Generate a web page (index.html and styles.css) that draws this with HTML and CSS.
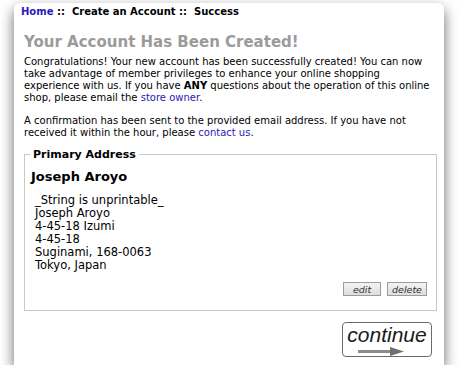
FILE: index.html
```html
<!DOCTYPE html>
<html lang="en">
  <head>
    <meta charset="UTF-8" />
    <title>Create an Account - Success</title>
    <link rel="stylesheet" href="styles.css">
  </head>
  <body>
    <div class="window">
      <div class="breadcrumb">
        <a href="#" class="crumb-link">Home</a> ::&nbsp; Create an Account ::&nbsp; Success
      </div>

      <h1 class="page-heading">Your Account Has Been Created!</h1>

      <p class="intro">
        Congratulations! Your new account has been successfully created! You can now
        take advantage of member privileges to enhance your online shopping
        experience with us. If you have <strong>ANY</strong> questions about the operation of this online
        shop, please email the <a href="#" class="text-link">store owner</a>.
      </p>

      <p class="intro">
        A confirmation has been sent to the provided email address. If you have not
        received it within the hour, please <a href="#" class="text-link">contact us</a>.
      </p>

      <fieldset class="address-box">
        <legend class="address-legend">Primary Address</legend>
        <h3 class="address-name">Joseph Aroyo</h3>
        <address class="address-lines">
          _String is unprintable_<br>
          Joseph Aroyo<br>
          4-45-18 Izumi<br>
          4-45-18<br>
          Suginami, 168-0063<br>
          Tokyo, Japan
        </address>
        <div class="address-actions">
          <button class="small-btn">edit</button>
          <button class="small-btn">delete</button>
        </div>
      </fieldset>

      <div class="button-row">
        <button class="continue-btn">
          <span class="continue-label">continue</span>
          <svg class="continue-arrow" width="46" height="9" viewBox="0 0 46 9">
            <rect x="0" y="3" width="34" height="3" fill="#8c8c8c" />
            <polygon points="32,0 46,4.5 32,9" fill="#6f6f6f" />
          </svg>
        </button>
      </div>
    </div>
  </body>
</html>
```

FILE: styles.css
```css
* {
  margin: 0;
  padding: 0;
  box-sizing: border-box;
}

body {
  background-color: white;
  font-family: "DejaVu Sans", Verdana, sans-serif;
  font-size: 10px;
  color: black;
}

.window {
  margin: 3px 0 0 14px;
  width: 430px;
  height: 362px;
  background-color: white;
  border-radius: 6px 6px 0 0;
  box-shadow: 0 6px 14px rgba(0, 0, 0, 0.6);
  padding: 2px 7px 0 7px;
}

/* Breadcrumb */
.breadcrumb {
  font-weight: bold;
  font-size: 10px;
  line-height: 14px;
}

.crumb-link {
  color: #2b1ab8;
  text-decoration: none;
}

.page-heading {
  color: #9b9b9b;
  font-size: 15px;
  font-weight: bold;
  margin: 14px 0 0 3px;
  line-height: 18px;
}

.intro {
  margin: 5px 0 11px 3px;
  line-height: 12px;
  font-size: 10px;
}

.intro + .intro {
  margin-top: 0;
}

.text-link {
  color: #2b1ab8;
  text-decoration: none;
}

/* Address */
.address-box {
  margin: -2px 0 0 3px;
  width: 413px;
  height: 163px;
  border: 1px solid #c8c8c8;
  padding: 0 9px 0 6px;
}

.address-legend {
  font-weight: bold;
  font-size: 11px;
  padding: 0 3px;
  margin-left: -1px;
}

.address-name {
  font-size: 13px;
  font-weight: bold;
  margin-top: 7px;
  line-height: 18px;
}

.address-lines {
  font-style: normal;
  font-size: 11.5px;
  line-height: 13px;
  margin: 8px 0 0 4px;
}

.address-actions {
  display: flex;
  justify-content: flex-end;
  gap: 6px;
  margin-top: 10px;
}

.small-btn {
  font-family: "DejaVu Sans", Verdana, sans-serif;
  font-style: italic;
  font-size: 9.5px;
  color: #333;
  height: 14px;
  padding: 0 3px;
  background: linear-gradient(#f4f4f4, #dddddd);
  border: 1px solid #9c9c9c;
}

.small-btn:first-child {
  width: 38px;
}

.small-btn:last-child {
  width: 40px;
}

/* Continue */
.button-row {
  display: flex;
  justify-content: flex-end;
  margin: 11px 5px 0 0;
}

.continue-btn {
  width: 90px;
  height: 35px;
  border: 1px solid #6a6a6a;
  border-radius: 4px;
  background: white;
  display: flex;
  flex-direction: column;
  align-items: center;
  cursor: pointer;
}

.continue-label {
  font-family: "Liberation Sans", Arial, sans-serif;
  font-style: italic;
  font-size: 21px;
  line-height: 22px;
  color: #1a1a1a;
  margin-top: 1px;
}

.continue-arrow {
  display: block;
  margin: 1px 0 0 -12px;
}
```
